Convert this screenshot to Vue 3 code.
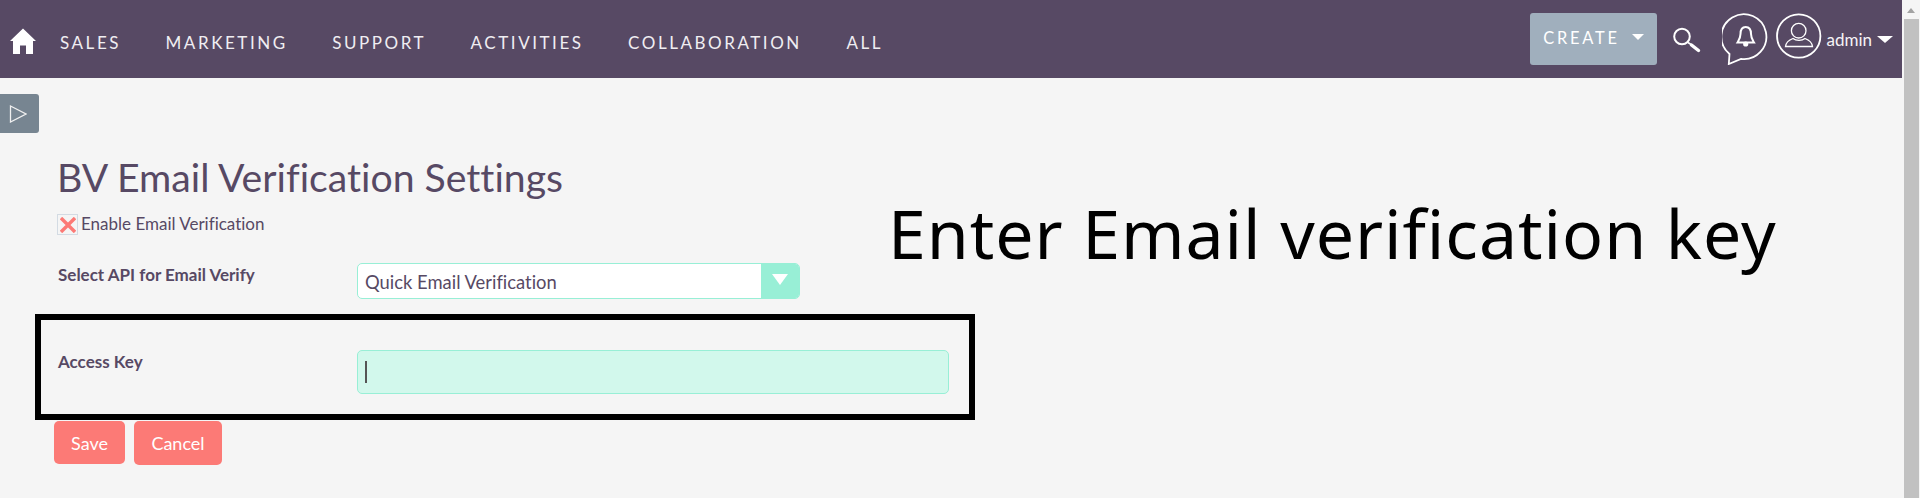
<template>
  <div class="page">
    <div class="main">
      <header class="topbar">
        <svg class="home" viewBox="0 0 26 26" width="26" height="26">
          <path d="M13 0.5 L26 13 L23 13 L23 26 L16 26 L16 17.5 L10 17.5 L10 26 L3 26 L3 13 L0 13 Z" fill="#fff" />
        </svg>
        <nav class="nav">
          <a v-for="item in menu" :key="item">{{ item }}</a>
        </nav>
        <div class="tools">
          <button class="create">CREATE <span class="caret"></span></button>
          <svg class="search" viewBox="0 0 28 28" width="28" height="28">
            <circle cx="9" cy="9.5" r="7.8" fill="none" stroke="#fff" stroke-width="2" />
            <path d="M15 15.5 L18 17.5" stroke="#fff" stroke-width="1.6" />
            <path d="M18.5 18 L25.5 23.5" stroke="#fff" stroke-width="3.4" stroke-linecap="round" />
          </svg>
          <svg class="bell" viewBox="0 0 48 52" width="48" height="52">
            <path d="M7.5 41 A22.5 22.5 0 1 1 19 46 L6.8 51 Z" fill="none" stroke="#fff" stroke-width="1.8" />
            <path d="M23.7 14 C19.5 14 18.5 17.5 18.5 21 C18.5 25 17 27 15.5 29.5 L32 29.5 C30.5 27 29 25 29 21 C29 17.5 28 14 23.7 14 Z" fill="none" stroke="#fff" stroke-width="2" />
            <circle cx="23.7" cy="31" r="2.6" fill="#fff" />
          </svg>
          <svg class="user" viewBox="0 0 46 46" width="46" height="46">
            <circle cx="22.7" cy="23" r="21.7" fill="none" stroke="#fff" stroke-width="1.8" />
            <circle cx="22.7" cy="17.7" r="7.3" fill="none" stroke="#fff" stroke-width="1.3" />
            <path d="M9.5 33.5 C10 29 13 27 17 25.5 C20 28 26 28 29 25.5 C33 27 36 29 36.5 33.5 Z" fill="none" stroke="#fff" stroke-width="1.3" />
          </svg>
          <span class="admin">admin</span>
          <span class="caret big"></span>
        </div>
      </header>

      <button class="toggle">
        <svg viewBox="0 0 18 18" width="18" height="18">
          <path d="M1.5 1 L17 9 L1.5 17 Z" fill="none" stroke="#f0f0f0" stroke-width="1.3" />
        </svg>
      </button>

      <section class="content">
        <h1>BV Email Verification Settings</h1>
        <label class="enable">
          <span class="check">
            <svg viewBox="0 0 16 16" width="16" height="16">
              <path d="M1 1 L15 15 M15 1 L1 15" stroke="#fc7a76" stroke-width="3.4" />
            </svg>
          </span>
          <span class="enable-text">Enable Email Verification</span>
        </label>

        <div class="row api">
          <div class="label">Select API for Email Verify</div>
          <div class="select">
            <span class="value">Quick Email Verification</span>
            <span class="arrow"><span class="caret white"></span></span>
          </div>
        </div>

        <div class="frame">
          <div class="label">Access Key</div>
          <div class="input"><span class="cursor"></span></div>
        </div>

        <div class="actions">
          <button class="btn save">Save</button>
          <button class="btn cancel">Cancel</button>
        </div>
      </section>

      <div class="note">Enter Email verification key</div>
    </div>

    <div class="scrollbar">
      <div class="up"></div>
      <div class="thumb"></div>
    </div>
  </div>
</template>

<script setup>
const menu = ['SALES', 'MARKETING', 'SUPPORT', 'ACTIVITIES', 'COLLABORATION', 'ALL']
</script>

<style>
html, body { margin: 0; background: #f5f5f5; overflow: hidden; }
</style>

<style scoped>
.page {
  display: flex;
  height: 498px;
  font-family: Lato, "Liberation Sans", sans-serif;
  font-variant-ligatures: no-common-ligatures;
  color: #574964;
}

.main {
  position: relative;
  flex: 1;
  min-width: 0;
  background: #f5f5f5;
}

.topbar {
  display: flex;
  align-items: center;
  height: 78px;
  padding-left: 10px;
  background: #574964;
  color: #fff;
}

.home { margin-top: 4px; flex-shrink: 0; }

.nav {
  display: flex;
  gap: 44.5px;
  margin-left: 24px;
  margin-top: 6px;
  font-size: 17px;
  letter-spacing: 2.55px;
  color: #f0eef2;
}

.tools {
  display: flex;
  align-items: center;
  margin-left: auto;
  padding-right: 9px;
}

.create {
  display: flex;
  align-items: center;
  justify-content: center;
  gap: 12px;
  width: 127px;
  height: 52px;
  border: none;
  border-radius: 3px;
  background: #a0afbd;
  color: #fff;
  font-family: inherit;
  font-size: 16.4px;
  letter-spacing: 2.8px;
  padding: 0 1px 4px 0;
}

.caret {
  display: inline-block;
  width: 0;
  height: 0;
  border-left: 6.5px solid transparent;
  border-right: 6.5px solid transparent;
  border-top: 6px solid #fff;
}

.search { margin-left: 16px; margin-top: 4px; }
.bell { margin-left: 21px; margin-top: 0; }
.user { margin-left: 6px; margin-top: -6px; }

.admin {
  margin-left: 4px;
  font-size: 17px;
  color: #f5f3f6;
}

.caret.big {
  margin-left: 5px;
  border-left-width: 8px;
  border-right-width: 8px;
  border-top-width: 7px;
}

.toggle {
  display: flex;
  align-items: center;
  justify-content: center;
  width: 39px;
  height: 39px;
  margin-top: 16px;
  padding: 0 4px 0 0;
  border: none;
  border-radius: 0 3px 3px 0;
  background: #778591;
}

.content {
  padding: 20px 0 0 57px;
}

h1 {
  margin: 0;
  font-size: 39.2px;
  line-height: 48px;
  font-weight: 400;
}

.enable {
  display: flex;
  align-items: center;
  gap: 3px;
  margin-top: 13px;
  font-size: 17px;
  line-height: 19px;
  height: 21px;
}

.enable-text { margin-bottom: 2px; }

.check {
  display: flex;
  align-items: center;
  justify-content: center;
  width: 21px;
  height: 21px;
  border: 1px solid #d3dbe3;
  box-sizing: border-box;
}

.label {
  width: 299px;
  flex-shrink: 0;
  margin: 2px 0 0 1px;
  font-size: 17px;
  font-weight: 700;
  line-height: 20px;
}

.row {
  display: flex;
}

.api {
  margin-top: 28px;
}

.select {
  display: flex;
  justify-content: space-between;
  width: 443px;
  height: 36px;
  box-sizing: border-box;
  border: 1px solid #98efd6;
  border-radius: 5px;
  background: #fff;
  font-size: 18.4px;
  line-height: 36px;
  overflow: hidden;
}

.value { padding-left: 7px; }

.arrow {
  display: flex;
  align-items: center;
  justify-content: center;
  width: 38px;
  padding-bottom: 4px;
  box-sizing: border-box;
  background: #98efd6;
}

.caret.white {
  border-left-width: 8px;
  border-right-width: 8px;
  border-top-width: 11px;
}

.frame {
  display: flex;
  align-items: flex-start;
  width: 940px;
  height: 106px;
  box-sizing: border-box;
  margin: 15px 0 0 -22px;
  padding: 30px 0 0 16px;
  border: 6px solid #000;
}

.input {
  display: flex;
  align-items: center;
  width: 592px;
  height: 44px;
  box-sizing: border-box;
  padding-left: 7px;
  border: 1px solid #98efd6;
  border-radius: 5px;
  background: #d2f8ec;
}

.cursor {
  width: 2px;
  height: 22px;
  background: #555;
}

.actions {
  display: flex;
  align-items: flex-start;
  gap: 9px;
  margin: 1px 0 0 -3px;
}

.btn {
  border: none;
  border-radius: 5px;
  background: #fc7a76;
  color: #fff;
  font-family: inherit;
  font-size: 18px;
  padding: 0;
}

.save { width: 71px; height: 43px; }
.cancel { width: 88px; height: 44px; }

.note {
  position: absolute;
  left: 888px;
  top: 189px;
  font-family: "Noto Sans", sans-serif;
  font-size: 68px;
  letter-spacing: 0.95px;
  line-height: 88px;
  color: #000;
  white-space: nowrap;
}

.scrollbar {
  width: 18px;
  flex-shrink: 0;
  background: #f5f5f5;
  overflow: hidden;
}

.up {
  width: 0;
  height: 0;
  margin: 8px 0 0 5px;
  border-left: 4.5px solid transparent;
  border-right: 4.5px solid transparent;
  border-bottom: 5px solid #a3a3a3;
}

.thumb {
  width: 15px;
  height: 479px;
  margin: 6px 0 0 2px;
  background: #c1c1c1;
}
</style>
